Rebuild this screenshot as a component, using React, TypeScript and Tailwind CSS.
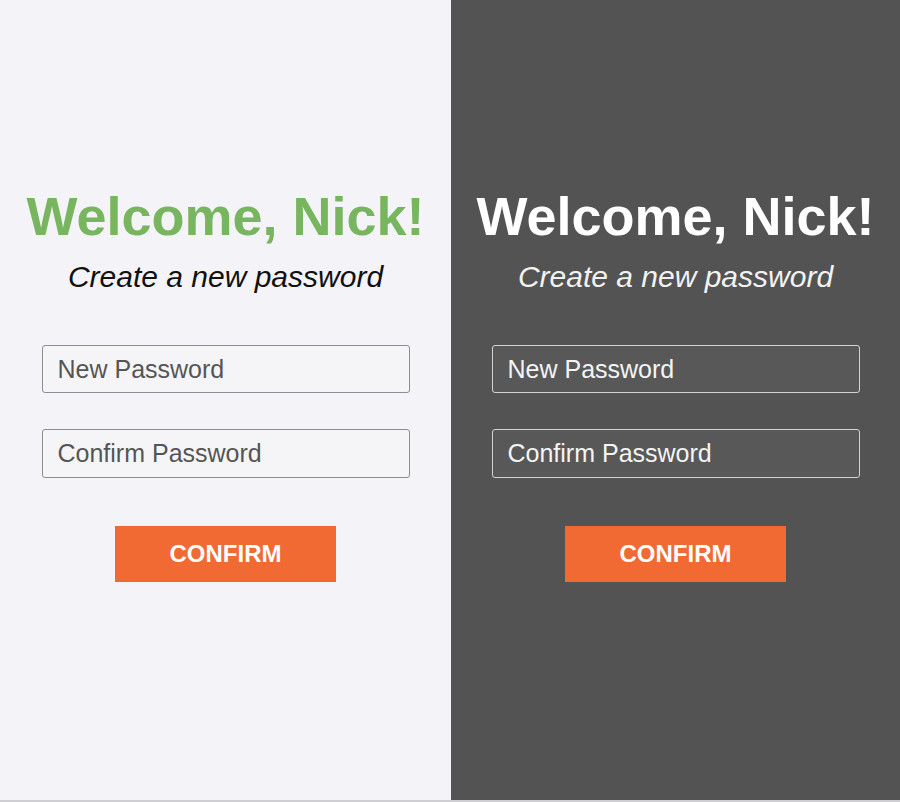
import React from "react";

const font = { fontFamily: '"Liberation Sans", Arial, sans-serif' };

function Panel({ dark }: { dark: boolean }) {
  return (
    <div
      className={`flex flex-col items-center h-[800px] pt-[189px] ${
        dark ? "w-[449px] bg-[#525352]" : "w-[451px] bg-[#f4f4f8]"
      }`}
    >
      <h1
        className={`text-[54px] leading-[54px] font-bold whitespace-nowrap ${
          dark ? "text-white" : "text-[#78b55f]"
        }`}
      >
        Welcome, Nick!
      </h1>
      <p
        className={`mt-[19px] text-[30px] leading-[30px] italic whitespace-nowrap ${
          dark ? "text-[#f2f2f2]" : "text-[#111111]"
        }`}
      >
        Create a new password
      </p>
      <input
        type="password"
        placeholder="New Password"
        className={`mt-[53px] w-[368px] h-[48px] rounded-[3px] border px-[15px] text-[25px] outline-none ${
          dark
            ? "bg-[#575857] border-[#d4d4d4] placeholder:text-[#f4f4f4] text-white"
            : "bg-[#f5f5f8] border-[#8d8d8d] placeholder:text-[#555555] text-[#555555]"
        }`}
        style={font}
      />
      <input
        type="password"
        placeholder="Confirm Password"
        className={`mt-[36px] w-[368px] h-[49px] rounded-[3px] border px-[15px] text-[25px] outline-none ${
          dark
            ? "bg-[#575857] border-[#d4d4d4] placeholder:text-[#f4f4f4] text-white"
            : "bg-[#f5f5f8] border-[#8d8d8d] placeholder:text-[#555555] text-[#555555]"
        }`}
        style={font}
      />
      <button
        className="mt-[48px] w-[221px] h-[56px] bg-[#f26a33] text-white text-[24px] font-bold"
        style={font}
      >
        CONFIRM
      </button>
    </div>
  );
}

export default function App() {
  return (
    <div
      className="w-[900px] h-[802px] bg-[#cfcfd3] overflow-hidden"
      style={font}
    >
      <div className="flex">
        <Panel dark={false} />
        <Panel dark={true} />
      </div>
    </div>
  );
}
